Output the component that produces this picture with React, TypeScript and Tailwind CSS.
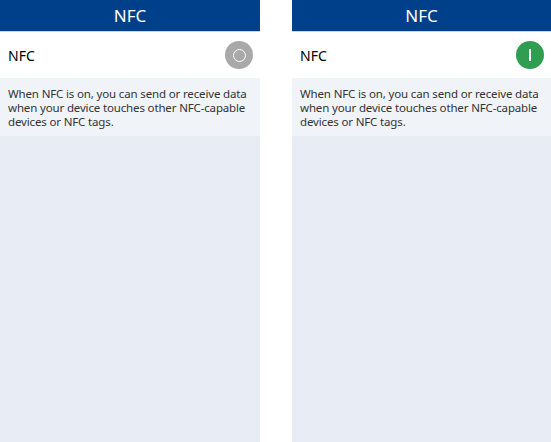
import React from 'react';

interface NfcPanelProps {
  on: boolean;
  className?: string;
}

const NfcPanel: React.FC<NfcPanelProps> = ({ on, className }) => {
  return (
    <div className={`flex flex-col h-[442px] bg-[#e8edf5] ${className ?? ''}`}>
      <div className="h-[32px] bg-[#003f8a] border-b border-[#c9d4e6] flex items-center justify-center text-white text-[17px]">
        NFC
      </div>
      <div className="h-[46px] bg-white flex items-center justify-between pl-[8px] pr-[7px]">
        <span className="text-[14px] text-black">NFC</span>
        {on ? (
          <div className="w-[28px] h-[28px] rounded-full bg-[#2f9e53] flex items-center justify-center">
            <div className="w-[1.5px] h-[12px] bg-white" />
          </div>
        ) : (
          <div className="w-[28px] h-[28px] rounded-full bg-[#a9a9a9] flex items-center justify-center">
            <div className="w-[13px] h-[13px] rounded-full border-[1.5px] border-white" />
          </div>
        )}
      </div>
      <div className="bg-[#f0f3f7] px-[8px] pt-[9px] pb-[7px] text-[11.5px] tracking-[-0.15px] leading-[14px] text-[#333]">
        When NFC is on, you can send or receive data when your device touches other NFC-capable devices or NFC tags.
      </div>
    </div>
  );
};

export default function App() {
  return (
    <div className="w-[551px] h-[442px] bg-white flex justify-between overflow-hidden" style={{ fontFamily: '"Noto Sans", "Open Sans", sans-serif' }}>
      <NfcPanel on={false} className="w-[260px]" />
      <NfcPanel on={true} className="w-[259px]" />
    </div>
  );
}
